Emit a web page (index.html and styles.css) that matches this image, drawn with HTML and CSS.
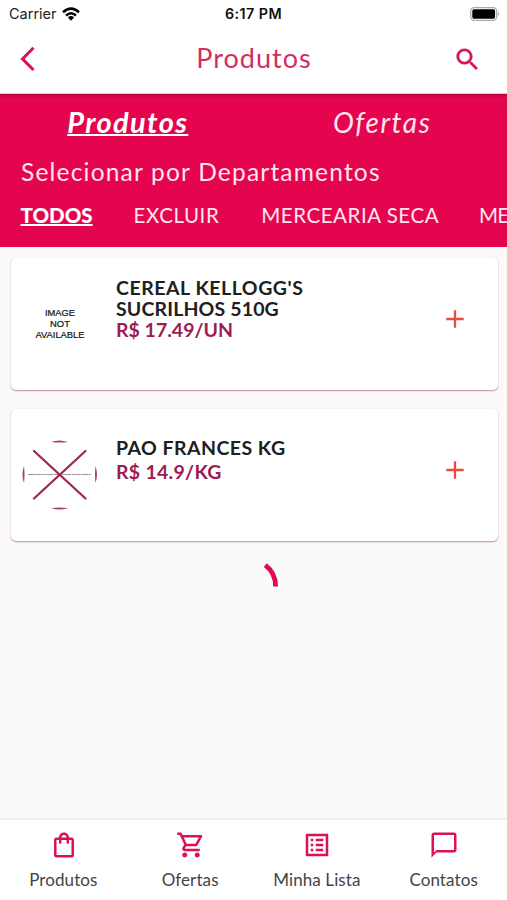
FILE: index.html
```html
<!DOCTYPE html>
<html lang="pt-BR">
<head>
<meta charset="utf-8">
<title>Produtos</title>
<link rel="stylesheet" href="styles.css">
</head>
<body>
<div class="screen">
  <div class="status">
    <span class="carrier">Carrier</span>
    <svg class="wifi" width="18" height="14" viewBox="0 0 18 14"><g fill="none" stroke="#000" stroke-width="2.5"><path d="M1 5.2Q9-2 17 5.2"/><path d="M4 8.5Q9 4 14 8.5"/></g><path d="M5.9 10.4Q9 7.7 12.1 10.4L9 13.7Z"/></svg>
    <span class="time">6:17 PM</span>
    <svg class="battery" width="30" height="14" viewBox="0 0 30 14"><rect x=".7" y=".7" width="26" height="12.6" rx="3.5" fill="#fff" stroke="#aaa" stroke-width="1.3"/><rect x="2.3" y="2.3" width="22.8" height="9.4" rx="1.6"/><path d="M28 4.6Q30 7 28 9.4Z" fill="#aaa"/></svg>
  </div>
  <header class="appbar">
    <svg class="back" width="16" height="26" viewBox="0 0 16 26"><path d="M13.5 1.8L2.5 12.9L13.5 24" fill="none" stroke="#d81353" stroke-width="3"/></svg>
    <h1 class="title">Produtos</h1>
    <svg class="search" width="29" height="29" viewBox="0 0 24 24"><path fill="#d81353" stroke="#d81353" stroke-width=".3" d="M15.5 14h-.79l-.28-.27C15.41 12.59 16 11.11 16 9.5 16 5.91 13.09 3 9.5 3S3 5.91 3 9.500 5.910 16 9.500 16c1.610 0 3.090-.59 4.230-1.570l.27.28v.79l5 4.990L20.490 19l-4.990-5zm-6 0C7.010 14 5 11.990 5 9.500S7.010 5 9.500 5 14 7.010 14 9.500 11.990 14 9.500 14z"/></svg>
  </header>
  <section class="filters">
    <div class="tabs"><div class="tab"><span class="tab-on">Produtos</span></div><div class="tab"><span class="tab-off">Ofertas</span></div></div>
    <div class="select">Selecionar por Departamentos</div>
    <div class="departments"><span class="dep-on">TODOS</span><span class="dep">EXCLUIR</span><span class="dep">MERCEARIA SECA</span><span class="dep-last">ME</span></div>
  </section>
  <main class="list">
    <article class="card">
      <div class="thumb noimage"><span>IMAGE</span><span>NOT</span><span>AVAILABLE</span></div>
      <div class="info"><div class="name n1">CEREAL KELLOGG'S</div><div class="name n2">SUCRILHOS 510G</div><div class="price">R$ 17.49/UN</div></div>
      <svg class="plus" width="18" height="18" viewBox="0 0 18 18"><path d="M9 .3V17.700M.3 9H17.700" stroke="#e74c43" stroke-width="2.300"/></svg>
    </article>
    <article class="card second">
      <div class="thumb"><svg width="76" height="70" viewBox="0 0 76 70"><g fill="#a54263"><path d="M29 2Q37.500-1 46 2Q37.500 3 29 2ZM29 68Q37.500 71 46 68Q37.500 67 29 68ZM2 26Q-1 34.500 2 43Q3 34.500 2 26ZM73.500 26Q76.500 34.500 73.500 43Q72.500 34.500 73.500 26Z"/></g><path d="M6 34.500H69" stroke="#999" stroke-width="1" stroke-dasharray="8 .5 5 .4 3 .6"/><path d="M12 11L63.500 58.500M63.500 11L12 58.500" stroke="#a12650" stroke-width="2.300" stroke-linecap="round"/></svg></div>
      <div class="info"><div class="name n3">PAO FRANCES KG</div><div class="price p2">R$ 14.9/KG</div></div>
      <svg class="plus" width="18" height="18" viewBox="0 0 18 18"><path d="M9 .3V17.700M.3 9H17.700" stroke="#e74c43" stroke-width="2.300"/></svg>
    </article>
    <svg class="spinner" width="20" height="26" viewBox="0 0 20 26"><path d="M2.300 2.200Q12.600 10 12.600 23.500" fill="none" stroke="#e4094f" stroke-width="4.800"/></svg>
  </main>
  <nav class="bottom">
    <div class="item"><svg viewBox="0 0 24 24"><path d="M18 6h-2c0-2.210-1.790-4-4-4S8 3.790 8 6H6c-1.100 0-2 .9-2 2v12c0 1.100.9 2 2 2h12c1.100 0 2-.9 2-2V8c0-1.100-.9-2-2-2zm-6-2c1.100 0 2 .9 2 2h-4c0-1.100.9-2 2-2zm6 16H6V8h2v2c0 .55.45 1 1 1s1-.45 1-1V8h4v2c0 .55.45 1 1 1s1-.45 1-1V8h2v12z"/></svg><span>Produtos</span></div>
    <div class="item"><svg viewBox="0 0 24 24"><path d="M15.550 13c.75 0 1.410-.41 1.750-1.030l3.580-6.490c.37-.66-.11-1.480-.87-1.480H5.210l-.94-2H1v2h2l3.600 7.590-1.350 2.440C4.520 15.370 5.480 17 7 17h12v-2H7l1.100-2h7.450zM6.160 6h12.150l-2.760 5H8.530L6.160 6zM7 18c-1.100 0-1.990.9-1.990 2S5.900 22 7 22s2-.9 2-2-.9-2-2-2zm10 0c-1.100 0-1.990.9-1.990 2s.89 2 1.990 2 2-.9 2-2-.9-2-2-2z"/></svg><span>Ofertas</span></div>
    <div class="item"><svg viewBox="0 0 24 24"><path d="M19 5v14H5V5h14m1.100-2H3.900c-.5 0-.9.4-.9.900v16.200c0 .4.400.9.900.9h16.200c.4 0 .9-.5.900-.9V3.900c0-.5-.5-.9-.9-.9zM11 7h6v2h-6V7zm0 4h6v2h-6v-2zm0 4h6v2h-6zM7 7h2v2H7zm0 4h2v2H7zm0 4h2v2H7z"/></svg><span>Minha Lista</span></div>
    <div class="item"><svg viewBox="0 0 24 24"><path d="M20 2H4c-1.100 0-2 .9-2 2v18l4-4h14c1.100 0 2-.9 2-2V4c0-1.100-.9-2-2-2zm0 14H6l-2 2V4h16v12z"/></svg><span>Contatos</span></div>
  </nav>
</div>
</body>
</html>
```
FILE: styles.css
```css
* { box-sizing: border-box; }
body { margin: 0; font-family: Lato, sans-serif; }
.screen { width: 507px; height: 900px; overflow: hidden; display: flex; flex-direction: column; background: #fafafa; }
.screen span, .title, .name, .price, .select { white-space: nowrap; }
.status { height: 28px; flex: none; display: flex; align-items: center; padding: 0 7px 1px 9px; background: #fff; font: 14.5px/20px Inter, sans-serif; color: #222; }
.carrier { width: 53px; }
.time { margin-left: 145px; width: 70px; font-weight: 600; font-size: 14.3px; letter-spacing: .45px; color: #111; }
.battery { margin-left: auto; }
.appbar { height: 66px; flex: none; display: flex; align-items: center; justify-content: space-between; background: #fff; padding: 0 25px 3px 20px; border-bottom: 1px solid #f3bdcf; }
.title { margin: 0; padding: 0 0 2px 19px; font-size: 27px; line-height: 36px; font-weight: 400; letter-spacing: 1px; color: #d42d60; }
.filters { height: 153px; flex: none; background: #e5054f; color: #ffe4ee; box-shadow: inset 0 3px 3px -1px #b90542; overflow: hidden; }
.tabs { display: flex; padding-top: 10px; }
.tab { flex: 1; text-align: center; font-size: 27px; line-height: 36px; font-style: italic; }
.tab-on { font-size: 29px; font-weight: 700; letter-spacing: 1.35px; margin-left: 2px; color: #fff; text-decoration: underline; text-decoration-thickness: 1.5px; text-underline-offset: 1px; }
.tab-off { font-size: 28px; letter-spacing: 1.6px; padding-left: 4px; }
.select { margin: 15px 0 0 21px; font-size: 24.5px; line-height: 32px; letter-spacing: 1.2px; }
.departments { display: flex; margin: 13px 0 0 20.5px; font-size: 20.5px; line-height: 28px; gap: 41px; }
.dep { letter-spacing: .54px; }
.dep + .dep { margin-left: 1px; }
.dep-last { letter-spacing: -1px; margin-left: -1px; }
.dep-on { font-weight: 900; color: #fff; text-decoration: underline; text-decoration-thickness: 1.5px; text-underline-offset: 1px; }
.list { flex: 1; padding: 11px 9.5px 0 10.5px; }
.card { height: 131.5px; display: flex; align-items: flex-start; background: #fff; border-radius: 5px; box-shadow: 0 1px 1.5px rgba(160,25,75,.5), 0 0 1px rgba(160,25,75,.15); padding-left: 11.5px; }
.second { margin-top: 19.5px; }
.thumb { width: 76px; flex: none; padding-top: 31px; }
.noimage { display: flex; flex-direction: column; align-items: center; padding-top: 48.5px; font: 9.4px/11.3px "Liberation Sans", sans-serif; color: #111; -webkit-text-stroke: .2px #111; }
.info { margin-left: 18px; width: 300px; padding-top: 19px; font-size: 19.5px; line-height: 21px; font-weight: 700; }
.second .info { padding-top: 27px; line-height: 24px; }
.name { color: #202020; }
.n1 { letter-spacing: .53px; }
.n2 { letter-spacing: .15px; }
.n3 { letter-spacing: .45px; }
.p2 { letter-spacing: .27px; }
.price { color: #9d1d50; }
.plus { margin: 52px 0 0 30px; }
.spinner { display: block; margin: 22px 0 0 252.5px; }
.bottom { height: 80px; flex: none; display: flex; background: #fff; box-shadow: 0 -1px 2px rgba(0,0,0,.08); }
.item { flex: 1; display: flex; flex-direction: column; align-items: center; padding-top: 10px; font-size: 17px; line-height: 24px; color: #444; letter-spacing: .1px; }
.item svg { width: 30px; height: 30px; fill: #dc1052; margin-bottom: 8px; }
.item:nth-child(-n+2) svg { margin-left: 1.5px; }
```
